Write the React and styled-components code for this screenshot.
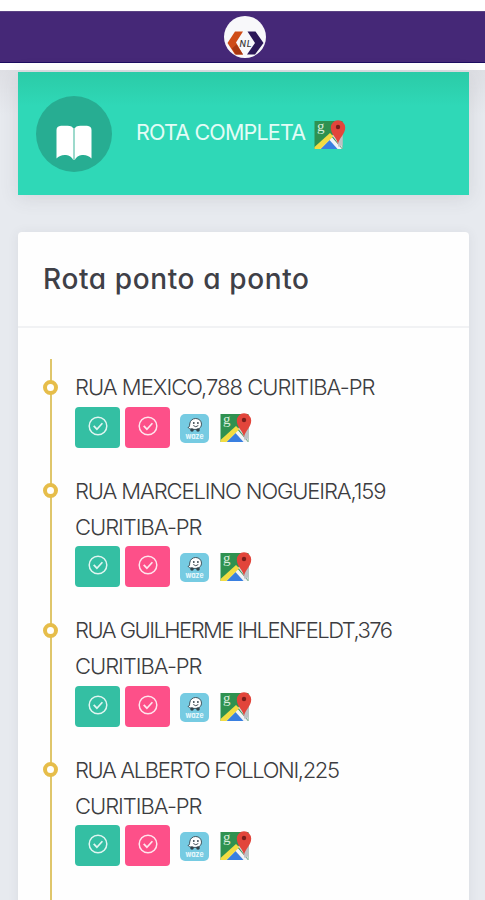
import React from "react";
import styled, { createGlobalStyle } from "styled-components";

const stops = [
  { lines: [{ text: "RUA MEXICO,788 CURITIBA-PR", tracking: -0.96 }] },
  {
    lines: [
      { text: "RUA MARCELINO NOGUEIRA,159", tracking: -1.1 },
      { text: "CURITIBA-PR", tracking: -1.02 },
    ],
  },
  {
    lines: [
      { text: "RUA GUILHERME IHLENFELDT,376", tracking: -1.52 },
      { text: "CURITIBA-PR", tracking: -1.02 },
    ],
  },
  {
    lines: [
      { text: "RUA ALBERTO FOLLONI,225", tracking: -1.35 },
      { text: "CURITIBA-PR", tracking: -1.02 },
    ],
  },
];

export default function App() {
  return (
    <Page>
      <GlobalStyle />
      <TopBar>
        <Logo />
      </TopBar>
      <Content>
        <RouteBanner>
          <BannerIcon>
            <BookIcon />
          </BannerIcon>
          <BannerTitle>ROTA COMPLETA</BannerTitle>
          <MapsIcon />
        </RouteBanner>
        <Card>
          <CardHeader>
            <CardTitle>Rota ponto a ponto</CardTitle>
          </CardHeader>
          <Timeline>
            {stops.map((stop) => (
              <Stop key={stop.lines[0].text}>
                <Marker />
                <div>
                  {stop.lines.map((line) => (
                    <Address key={line.text} $tracking={line.tracking}>
                      {line.text}
                    </Address>
                  ))}
                  <Actions>
                    <ActionButton $color="#34bfa3" aria-label="Confirmar">
                      <CheckIcon />
                    </ActionButton>
                    <ActionButton $color="#fd5089" aria-label="Cancelar">
                      <CheckIcon />
                    </ActionButton>
                    <WazeIcon />
                    <MapsIcon />
                  </Actions>
                </div>
              </Stop>
            ))}
          </Timeline>
        </Card>
      </Content>
    </Page>
  );
}

// Icons
function Logo() {
  return (
    <svg width="44" height="44" viewBox="0 0 44 44">
      <circle cx="22" cy="22" r="21" fill="#f8f8fa" />
      <path d="M12 16.500h8l-7 11 7 12h-8L4.500 28z" fill="#cf4c17" />
      <path d="M9 33.500l4.500-4 6.500 10h-7z" fill="#a93811" />
      <path d="M24.500 16.500h8L40.500 28l-8.500 11.500h-8l8-11.500z" fill="#2c1858" />
      <text x="16.500" y="31.500" fontSize="8.500" fontWeight="500" fontStyle="italic" fill="#333" textLength="12">
        NL
      </text>
    </svg>
  );
}

function BookIcon() {
  return (
    <svg width="36" height="36" viewBox="0 0 36 36">
      <path
        d="M0.500 5Q.500 1 5 .700h6.500Q16.500 1 17.300 3.500V35Q15 30.500 10 30Q4 29.500 .500 33.500zM35.500 5Q35.500 1 31 .700h-6.500Q19.500 1 18.700 3.500V35Q21 30.500 26 30Q32 29.500 35.500 33.500z"
        fill="#fff"
      />
      <path d="M18 3v32" stroke="#b5e2d7" strokeWidth="1.400" />
    </svg>
  );
}

function CheckIcon() {
  return (
    <svg width="20" height="20" viewBox="0 0 20 20" fill="none" stroke="#fff" strokeOpacity=".85">
      <circle cx="10" cy="10" r="8.800" strokeWidth="1.500" />
      <path d="M5.700 9.800l3.200 3.400 5.500-6" strokeWidth="1.700" />
    </svg>
  );
}

function WazeIcon() {
  return (
    <svg width="29" height="29" viewBox="0 0 29 29">
      <rect width="29" height="29" rx="5" fill="#76cbe2" />
      <path
        d="M8 13.500c1.800-.3 1.500-1.800 1.700-3.500C10.100 6.500 12.500 4.500 15.700 4.500c3.400 0 5.800 2.400 5.800 5.600 0 2.900-2 4.700-3.800 5.300h-5.600C10.200 15 8.700 14.500 8 13.500z"
        fill="#fff"
        stroke="#3f5660"
        strokeWidth="1"
      />
      <circle cx="12" cy="16" r="1.800" fill="#34434b" />
      <circle cx="18" cy="16" r="1.800" fill="#34434b" />
      <circle cx="13.800" cy="9" r=".9" fill="#34434b" />
      <circle cx="17.900" cy="9" r=".9" fill="#34434b" />
      <path d="M13.300 11.500q2.500 2.500 5 0" fill="none" stroke="#34434b" strokeWidth=".9" />
      <text x="5.500" y="25" fontSize="7.500" fontWeight="700" fill="#e8f8fc" textLength="18" lengthAdjust="spacingAndGlyphs">
        waze
      </text>
    </svg>
  );
}

function MapsIcon() {
  return (
    <svg width="32" height="32" viewBox="0 0 32 32">
      <path d="M.500 3h28v28H.500z" fill="#2f9150" />
      <path d="M18 17.500L28.500 7v24z" fill="#d5d7dc" />
      <path d="M17 18L5 31h23z" fill="#f4f4f5" />
      <path d="M15.500 22L6.500 31h17z" fill="#397fe0" />
      <path d="M16 15l3.300 3.200L6.500 31h-6v-2z" fill="#f2dc42" />
      <path d="M22.500 21V10h6v17l-4 2z" fill="#bec0c5" />
      <path d="M24 26c-.7-6-7.200-9-7.200-16.500a7.200 7.200 0 0 1 14.400 0c0 7-6 10-7.200 16.500z" fill="#e2453b" />
      <circle cx="24" cy="9" r="2.200" fill="#7a1e1b" />
      <text x="3" y="13" fontFamily="Liberation Serif" fontSize="15" fill="#d7eddc">
        g
      </text>
    </svg>
  );
}

// Styles
const GlobalStyle = createGlobalStyle`
  * {
    box-sizing: border-box;
  }
  body {
    margin: 0;
    background: #fff;
    font-family: Inter, "Open Sans", sans-serif;
    font-feature-settings: "cv11" 1;
  }
  svg {
    display: block;
    flex-shrink: 0;
  }
`;
const Page = styled.div`
  height: 900px;
  padding-top: 11px;
  overflow: hidden;
  display: flex;
  flex-direction: column;
`;
const TopBar = styled.header`
  height: 52px;
  flex-shrink: 0;
  display: flex;
  align-items: center;
  justify-content: center;
  padding: 0 0 0 5px;
  background: #452877;
  border-top: 1px solid #5b4384;
  border-bottom: 1px solid #1c0c60;
`;
const Content = styled.main`
  flex: 1;
  margin-top: 7px;
  padding: 2px 16px 0 18px;
  background: linear-gradient(#dedfe4 0, #e7eaef 45px);
`;
const RouteBanner = styled.section`
  height: 123px;
  display: flex;
  align-items: center;
  padding-left: 18px;
  background: linear-gradient(#2bcba7 0, #2fd8b7 34px);
  box-shadow: 0 3px 18px rgba(69, 65, 78, 0.12);
`;
const BannerIcon = styled.div`
  width: 76px;
  height: 76px;
  display: flex;
  align-items: center;
  justify-content: center;
  padding-top: 18px;
  border-radius: 50%;
  background: #27ad92;
`;
const BannerTitle = styled.h2`
  width: 178px;
  margin: -3px 0 0 24px;
  font-size: 21.5px;
  font-weight: 400;
  letter-spacing: -0.82px;
  white-space: nowrap;
  color: #e3fcf6;
`;
const Card = styled.section`
  height: 700px;
  margin-top: 37px;
  border-radius: 4px 4px 0 0;
  background: #fefefe;
  box-shadow: 0 1px 12px rgba(69, 65, 78, 0.08);
`;
const CardHeader = styled.div`
  height: 96px;
  display: flex;
  align-items: center;
  padding: 0 25px;
  border-bottom: 2px solid #f1f2f4;
`;
const CardTitle = styled.h1`
  margin: 0;
  font-size: 28px;
  font-weight: 450;
  letter-spacing: 0.62px;
  white-space: nowrap;
  color: #3f4047;
`;
const Timeline = styled.ul`
  height: 600px;
  margin: 31px 0 0 32px;
  padding: 10px 0 0;
  list-style: none;
  background: linear-gradient(#dfc66b, #dfc66b) 0 0 / 2px 100% no-repeat;
`;
const Stop = styled.li`
  display: flex;
  gap: 17px;
  margin-left: -7px;
`;
const Marker = styled.span`
  width: 15px;
  height: 15px;
  margin-top: 10.5px;
  flex-shrink: 0;
  border: 4.5px solid #e6bd4a;
  border-radius: 50%;
  background: #fff;
`;
const Address = styled.div`
  height: 35.75px;
  font-size: 22px;
  font-weight: 300;
  line-height: 37.75px;
  letter-spacing: ${(props) => props.$tracking}px;
  white-space: nowrap;
  color: #3c3c40;
`;
const Actions = styled.div`
  height: 68px;
  display: flex;
  align-items: flex-start;
  padding-top: 2px;

  > svg {
    margin: 7px 0 0 10px;
  }
  > svg:last-child {
    margin: 4px 0 0 11px;
  }
`;
const ActionButton = styled.button`
  width: 45px;
  height: 41px;
  display: flex;
  align-items: center;
  justify-content: center;
  padding: 0 0 3px;
  border: 0;
  border-radius: 4px;
  background: ${(props) => props.$color};

  & + & {
    margin-left: 5px;
  }
`;
